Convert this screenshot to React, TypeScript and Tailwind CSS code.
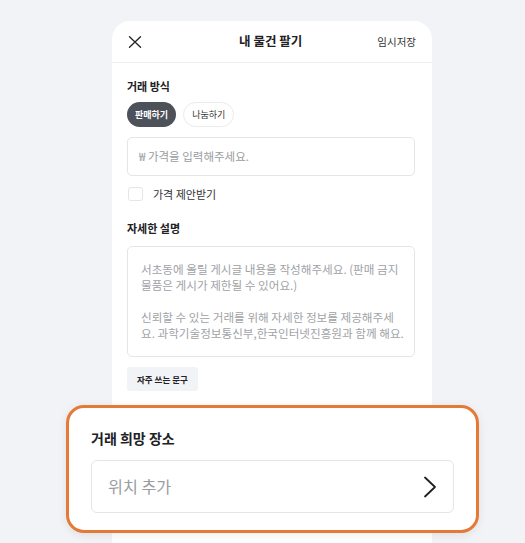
import React from 'react';

const descLines = [
  '서초동에 올릴 게시글 내용을 작성해주세요. (판매 금지',
  '물품은 게시가 제한될 수 있어요.)',
  '',
  '신뢰할 수 있는 거래를 위해 자세한 정보를 제공해주세',
  '요. 과학기술정보통신부,한국인터넷진흥원과 함께 해요.',
];

function CloseIcon() {
  return (
    <svg width="14" height="12" viewBox="0 0 14 12" fill="none">
      <path d="M1.5 0.8 L12.5 11.2 M12.5 0.8 L1.5 11.2" stroke="#222" strokeWidth="1.3" strokeLinecap="round" />
    </svg>
  );
}

function Chevron() {
  return (
    <svg width="14" height="22" viewBox="0 0 14 22" fill="none">
      <path d="M2 1.5 L12 11 L2 20.5" stroke="#1f1f1f" strokeWidth="1.8" strokeLinecap="round" strokeLinejoin="round" />
    </svg>
  );
}

export default function App() {
  return (
    <div className="relative h-[543px] w-[525px] overflow-hidden bg-[#f1f3f6] font-['Noto_Sans_CJK_KR','Noto_Sans',sans-serif] text-[#212124]">
      <div className="ml-[112px] mt-[21px] h-[600px] w-[320px] rounded-t-[18px] bg-white">
        {/* header */}
        <div className="flex h-[42px] items-center justify-between border-b border-[#eceef1] px-4">
          <CloseIcon />
          <span className="ml-[22px] text-[12.5px] font-bold">내 물건 팔기</span>
          <span className="text-[10.5px] text-[#333]">임시저장</span>
        </div>

        <div className="px-[15px] pt-[15px]">
          <div className="text-[11px] font-bold leading-4">거래 방식</div>
          <div className="mt-2 flex gap-[7px]">
            <button className="h-[25px] rounded-full bg-[#4d5159] px-[8px] text-[9px] font-bold text-white">판매하기</button>
            <button className="h-[25px] rounded-full border border-[#eaebee] bg-white px-[8px] text-[9px] text-[#333]">나눔하기</button>
          </div>

          <div className="mt-[10px] flex h-[39px] w-[288px] items-center rounded-[5px] border border-[#e3e5e8] px-[11px] text-[11.5px] text-[#9a9ca1]">
            ₩ 가격을 입력해주세요.
          </div>

          <div className="mt-[10px] flex h-4 items-center gap-[10px]">
            <span className="ml-px h-[14px] w-[15px] rounded-[3px] border border-[#e3e5e8]" />
            <span className="text-[11px] text-[#333]">가격 제안받기</span>
          </div>

          <div className="mt-[18px] text-[11px] font-bold leading-4">자세한 설명</div>

          <div className="mt-[10px] h-[111px] w-[288px] rounded-[5px] border border-[#e3e5e8] px-[13px] pt-[14px] text-[11.6px] leading-4 text-[#a0a2a7]">
            {descLines.map((line, i) => (
              <div key={i} className="h-4 whitespace-nowrap">{line}</div>
            ))}
          </div>

          <button className="mt-[10px] h-6 rounded-[3px] bg-[#f2f3f6] px-[10px] text-[8.5px] font-bold text-[#222]">
            자주 쓰는 문구
          </button>
        </div>
      </div>

      {/* highlighted callout */}
      <div className="absolute left-[66px] top-[405px] w-[413px] rounded-[18px] border-[3px] border-[#e47a35] bg-white px-[22px] pb-[17px] pt-[20px] shadow-[0_2px_10px_rgba(0,0,0,0.08)]">
        <div className="text-[14px] font-bold leading-5 text-[#212124]">거래 희망 장소</div>
        <div className="mt-[12px] flex h-[53px] items-center justify-between rounded-[6px] border border-[#e3e5e8] pl-4 pr-[16px]">
          <span className="text-[16.2px] text-[#9a9ca1]">위치 추가</span>
          <Chevron />
        </div>
      </div>
    </div>
  );
}
